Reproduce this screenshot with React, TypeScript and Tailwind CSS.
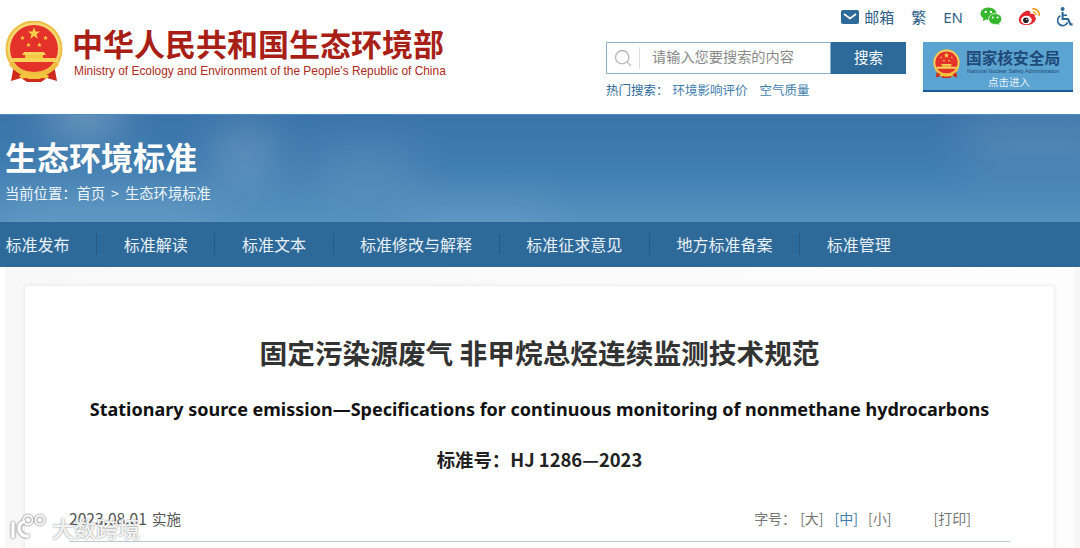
import React from "react";
import { Search } from "lucide-react";

const cjk = { fontFamily: '"Noto Sans CJK SC", "Liberation Sans", sans-serif' };
const nav = ["标准发布", "标准解读", "标准文本", "标准修改与解释", "标准征求意见", "地方标准备案", "标准管理"];

function Star({ x, y, r }: { x: number; y: number; r: number }) {
  const pts = Array.from({ length: 10 }, (_, i) => {
    const a = (-90 + i * 36) * (Math.PI / 180);
    const rr = i % 2 === 0 ? r : r * 0.4;
    return `${x + rr * Math.cos(a)},${y + rr * Math.sin(a)}`;
  }).join(" ");
  return <polygon points={pts} fill="#f8d24a" />;
}

function Emblem({ className }: { className: string }) {
  return (
    <svg viewBox="0 0 58 62" className={className}>
      <path d="M9 44 L6 60 L16 57 L22 61 L36 61 L42 57 L52 60 L49 44 Z" fill="#cf2a1e" />
      <circle cx="29" cy="28" r="28.5" fill="#efbd42" />
      <circle cx="29" cy="28" r="26.5" fill="#f6d873" />
      <circle cx="29" cy="28" r="24" fill="#e4312a" />
      <Star x={29} y={12.5} r={6.5} />
      <Star x={17.5} y={17} r={2.6} />
      <Star x={40.5} y={17} r={2.6} />
      <Star x={23.5} y={24} r={2.6} />
      <Star x={34.5} y={24} r={2.6} />
      <path d="M19 31 H39 L41 34 H17 Z" fill="#f6d257" />
      <rect x="20" y="34" width="18" height="3" fill="#f4c93f" />
      <path d="M7 37 H51 L50 41 H8 Z" fill="#f6d257" />
      <path d="M8 40 Q15 51 29 51 Q43 51 50 40 L54 44 Q44 56 29 56 Q14 56 4 44 Z" fill="#efbd42" />
      <path d="M14 55 q7 -6 11 -1 q4 -3 8 0 q4 -5 11 1 l-3 3 q-3 -2 -7 0 H24 q-4 -2 -7 0 Z" fill="#f3c63e" />
    </svg>
  );
}

function MailIcon() {
  return (
    <svg viewBox="0 0 18 14" className="h-[14px] w-[18px]">
      <rect width="18" height="14" rx="2" fill="#2e6a99" />
      <path d="M3 4 L9 8.5 L15 4" fill="none" stroke="#fff" strokeWidth="1.6" />
    </svg>
  );
}

function WechatIcon() {
  return (
    <svg viewBox="0 0 22 19" className="h-[19px] w-[22px]">
      <path d="M8.5 0.5 C13 0.5 16.5 3.4 16.5 6.8 C16.5 10.4 13 13 8.5 13 C7.5 13 6.6 12.9 5.8 12.6 L2.8 14.3 L3.5 11.3 C1.6 10.1 0.5 8.5 0.5 6.8 C0.5 3.4 4 0.5 8.5 0.5 Z" fill="#35b62c" />
      <path d="M15.2 6.6 C18.9 6.6 21.8 9 21.8 12 C21.8 13.6 20.9 15 19.5 16 L20 18.6 L17.4 17.2 C16.7 17.4 16 17.5 15.2 17.5 C11.5 17.5 8.6 15 8.6 12 C8.6 9 11.5 6.6 15.2 6.6 Z" fill="#35b62c" stroke="#ffffff" strokeWidth="0.8" />
      <circle cx="5.7" cy="4.9" r="1.2" fill="#fff" />
      <circle cx="11" cy="4.9" r="1.2" fill="#fff" />
      <circle cx="12.8" cy="10.6" r="1" fill="#fff" />
      <circle cx="17.6" cy="10.6" r="1" fill="#fff" />
    </svg>
  );
}

function WeiboIcon() {
  return (
    <svg viewBox="0 0 22 18" className="h-[18px] w-[22px]">
      <path d="M0.8 12.5 C0.3 8.5 5 3.6 9 2.8 C12 2.3 12.8 4 12.2 6 C15.5 5 17.8 6.4 16.6 8.8 C18.6 9.6 18.3 12.5 15.8 14.4 C11.5 18.4 1.6 18 0.8 12.5 Z" fill="#e6262e" />
      <ellipse cx="8.4" cy="12" rx="5.4" ry="4.3" fill="#fff" />
      <circle cx="7.9" cy="12.2" r="2.8" fill="#222" />
      <circle cx="8.7" cy="11.4" r="0.7" fill="#fff" />
      <path d="M14.5 1 C18.5 0.4 22 3.5 20.8 7.8" fill="none" stroke="#f39a1e" strokeWidth="1.8" />
      <path d="M14.8 4 C16.8 3.8 18.4 5.3 17.9 7.2" fill="none" stroke="#f39a1e" strokeWidth="1.4" />
    </svg>
  );
}

function WheelchairIcon() {
  return (
    <svg viewBox="0 0 16 20" className="h-[20px] w-[16px]">
      <circle cx="5.6" cy="2" r="2" fill="#2e6a99" />
      <path d="M5.6 5 V12 H11 L13.4 17.4 H15.6" fill="none" stroke="#2e6a99" strokeWidth="2.1" />
      <path d="M5.6 8.2 H10" fill="none" stroke="#2e6a99" strokeWidth="1.6" />
      <path d="M3.4 8.8 A5.2 5.2 0 1 0 10.6 15.4" fill="none" stroke="#2e6a99" strokeWidth="1.7" />
    </svg>
  );
}

export default function App() {
  return (
    <div className="h-[548px] w-[1080px] overflow-hidden bg-white" style={cjk}>
      <header className="flex h-[114px] justify-between bg-white pl-[5px] pr-[7px]">
        <div className="flex pt-[21px]">
          <Emblem className="h-[62px] w-[58px]" />
          <div className="ml-[11px] flex flex-col">
            <div className="ml-[-2px] mt-[3px] text-[31px] font-bold leading-[38px] text-[#a81f17] whitespace-nowrap">中华人民共和国生态环境部</div>
            <div className="mt-[1px] text-[11.9px] leading-[16px] text-[#ad2a22] whitespace-nowrap" style={{ fontFamily: '"Liberation Sans", sans-serif' }}>
              Ministry of Ecology and Environment of the People's Republic of China
            </div>
          </div>
        </div>
        <div className="flex w-[467px] flex-col">
          <div className="mt-[7px] flex h-[19px] items-center justify-end text-[15px] leading-[18px] text-[#2f5f88]">
            <MailIcon />
            <span className="ml-[5px]">邮箱</span>
            <span className="ml-[17px]">繁</span>
            <span className="ml-[17px]" style={{ fontFamily: '"Noto Sans", sans-serif' }}>EN</span>
            <span className="ml-[17px]"><WechatIcon /></span>
            <span className="ml-[16px]"><WeiboIcon /></span>
            <span className="ml-[17px]"><WheelchairIcon /></span>
          </div>
          <div className="mt-[16px] flex justify-between">
            <div className="flex flex-col">
              <div className="flex h-[32px] w-[300px]">
                <div className="flex flex-1 items-center border border-[#8fb0cb] bg-white">
                  <Search className="ml-[6px] h-[20px] w-[20px] text-[#b5b5b5]" strokeWidth={1.6} />
                  <div className="ml-[6px] h-[22px] w-px bg-[#dddddd]" />
                  <span className="ml-[12px] pb-[3px] text-[14.2px] text-[#8a8a8a]">请输入您要搜索的内容</span>
                </div>
                <div className="flex w-[75px] items-center justify-center bg-[#2e6a99] pb-[3px] text-[14.5px] text-white">搜索</div>
              </div>
              <div className="mt-[8px] flex text-[12.5px] leading-[16px] text-[#2e6a99]">
                <span>热门搜索：</span>
                <span className="ml-[4px] text-[#3f7eae]">环境影响评价</span>
                <span className="ml-[12px] text-[#3f7eae]">空气质量</span>
              </div>
            </div>
            <div className="flex h-[50px] w-[150px] border-b-2 border-[#1d5a93] bg-[#5ba3d1] pl-[10px]">
              <Emblem className="mt-[6px] h-[32px] w-[27px]" />
              <div className="ml-[6px] flex flex-col items-center">
                <div className="mt-[6px] text-[15.7px] font-bold leading-[20px] text-[#1f4a78] whitespace-nowrap">国家核安全局</div>
                <div className="text-[5.4px] leading-[6px] text-[#1f4a78] whitespace-nowrap" style={{ fontFamily: '"Liberation Sans", sans-serif' }}>National Nuclear Safety Administration</div>
                <div className="mt-[1px] ml-[-8px] text-[10.5px] leading-[14px] text-[#e8f2f9]">点击进入</div>
              </div>
            </div>
          </div>
        </div>
      </header>

      <section className="relative h-[108px] overflow-hidden border-t border-[#4d8cc4] bg-[linear-gradient(180deg,#3a74a9_0%,#3f7cb0_45%,#5592bf_100%)] pl-[5px]">
        <div className="absolute left-[50px] top-[-25px] h-[40px] w-[70px] rounded-full bg-white/40 blur-xl" />
        <div className="absolute left-[215px] top-[15px] h-[50px] w-[60px] rounded-full bg-white/25 blur-xl" />
        <div className="absolute left-[310px] top-[35px] h-[35px] w-[110px] rounded-full bg-white/15 blur-xl" />
        <div className="absolute left-[0px] top-[75px] h-[40px] w-[220px] rounded-full bg-white/10 blur-xl" />
        <div className="absolute left-[400px] top-[90px] h-[30px] w-[160px] rounded-full bg-white/10 blur-xl" />
        <div className="absolute left-[960px] top-[5px] h-[40px] w-[160px] rounded-full bg-white/15 blur-xl" />
        <div className="relative">
          <div className="pt-[18px] text-[32px] font-bold leading-[46px] text-white">生态环境标准</div>
          <div className="mt-[4px] flex text-[14.3px] leading-[20px] text-[#eef5fa]">
            <span>当前位置：首页</span>
            <span className="mx-[6px]">&gt;</span>
            <span>生态环境标准</span>
          </div>
        </div>
      </section>

      <nav className="flex h-[45px] items-center bg-[#2e6a99] pb-[1px] pl-[5.5px] text-[16px] text-[#e8f0f6]">
        {nav.map((item, i) => (
          <React.Fragment key={item}>
            <span className="whitespace-nowrap">{item}</span>
            {i < nav.length - 1 && <span className="mx-[26.6px] h-[22px] w-px bg-[#255a85]" />}
          </React.Fragment>
        ))}
      </nav>

      <main className="relative flex h-[281px] overflow-hidden bg-[#f7f7f7]">
        <div className="h-full w-[5px] bg-white" />
        <div className="h-full w-[1069px] bg-[linear-gradient(90deg,#f8f8f8,#fdfdfd)] px-[19px] pt-[18px]">
          <article className="h-[400px] border border-[#efefef] bg-white px-[44px] text-center shadow-[0_0_4px_rgba(0,0,0,0.05)]">
            <h1 className="mt-[47px] text-[27.7px] font-bold leading-[38px] text-[#333333] whitespace-nowrap">固定污染源废气 非甲烷总烃连续监测技术规范</h1>
            <h2 className="mt-[25px] text-[18px] font-bold leading-[26px] text-[#111111] whitespace-nowrap" style={{ fontFamily: '"Noto Sans", sans-serif' }}>
              Stationary source emission—Specifications for continuous monitoring of nonmethane hydrocarbons
            </h2>
            <div className="mt-[24px] text-[18.4px] font-bold leading-[26px] text-[#222222]">标准号：HJ 1286—2023</div>
            <div className="mt-[25px] flex h-[45px] items-center justify-between border-b border-[#b9ccd9] pb-[1px] text-[14.5px] text-[#555555]">
              <span><span className="text-[15.6px]">2023.08.01</span><span className="ml-[5px]">实施</span></span>
              <div className="mr-[39px] flex text-[14px] text-[#777777]">
                <span>字号：</span>
                <span className="ml-[4px]">[大]</span>
                <span className="ml-[11px] text-[#3f7eae]">[中]</span>
                <span className="ml-[10px]">[小]</span>
                <span className="ml-[42px]">[打印]</span>
              </div>
            </div>
          </article>
        </div>
        <div className="absolute left-[10px] top-[247px] flex items-center text-white/90 [text-shadow:0_0_2px_rgba(0,0,0,0.55)]">
          <svg viewBox="0 0 38 26" className="h-[26px] w-[38px] drop-shadow-[0_0_1px_rgba(0,0,0,0.7)]">
            <g fill="none" stroke="#ffffff">
              <path d="M3 8 V24" strokeWidth="3.4" />
              <path d="M15 7 Q7 10 9.5 17 Q12 23 19 22" strokeWidth="3.4" />
              <circle cx="18" cy="6" r="4.5" strokeWidth="1.8" />
              <circle cx="30" cy="6" r="4.5" strokeWidth="1.8" />
            </g>
          </svg>
          <span className="ml-[4px] text-[22px] font-medium leading-[26px]">大数跨境</span>
        </div>
      </main>
    </div>
  );
}
